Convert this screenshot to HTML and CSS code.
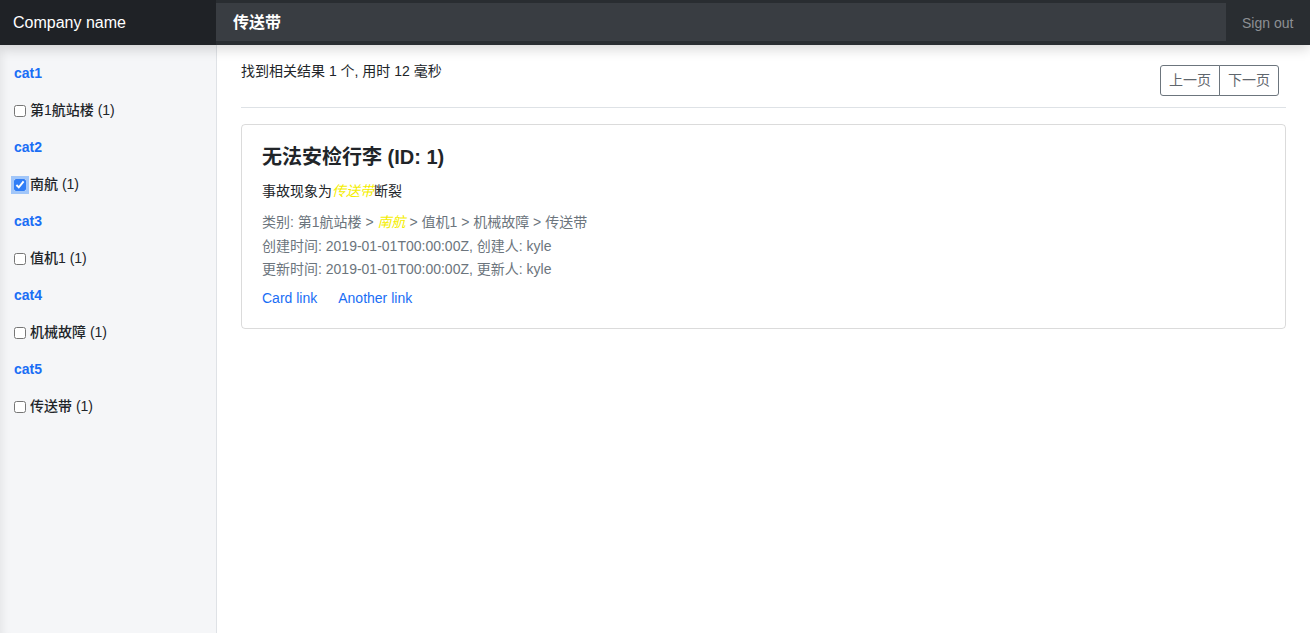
FILE: index.html
```html
<!DOCTYPE html>
<html lang="zh">
<head>
<meta charset="utf-8">
<title>Dashboard</title>
<link rel="stylesheet" href="styles.css">
</head>
<body>
<header class="navbar">
  <a class="brand" href="#">Company name</a>
  <div class="search"><span class="search-text">传送带</span></div>
  <a class="signout" href="#">Sign out</a>
</header>
<div class="layout">
  <nav class="sidebar">
    <div class="cat">cat1</div>
    <label class="item"><input type="checkbox"> 第1航站楼 (1)</label>
    <div class="cat">cat2</div>
    <label class="item"><input type="checkbox" class="focused" checked> 南航 (1)</label>
    <div class="cat">cat3</div>
    <label class="item"><input type="checkbox"> 值机1 (1)</label>
    <div class="cat">cat4</div>
    <label class="item"><input type="checkbox"> 机械故障 (1)</label>
    <div class="cat">cat5</div>
    <label class="item"><input type="checkbox"> 传送带 (1)</label>
  </nav>
  <main class="main">
    <div class="head">
      <div class="result">找到相关结果 1 个, 用时 12 毫秒</div>
      <div class="btn-group">
        <button class="btn">上一页</button><button class="btn">下一页</button>
      </div>
    </div>
    <div class="card">
      <h5 class="card-title">无法安检行李 (ID: 1)</h5>
      <p class="card-text">事故现象为<em class="hl">传送带</em>断裂</p>
      <div class="meta">
        <div>类别: 第1航站楼 &gt; <em class="hl">南航</em> &gt; 值机1 &gt; 机械故障 &gt; 传送带</div>
        <div>创建时间: 2019-01-01T00:00:00Z, 创建人: kyle</div>
        <div>更新时间: 2019-01-01T00:00:00Z, 更新人: kyle</div>
      </div>
      <div class="links">
        <a href="#" class="card-link">Card link</a>
        <a href="#" class="card-link">Another link</a>
      </div>
    </div>
  </main>
</div>
</body>
</html>
```

FILE: styles.css
```css
* { box-sizing: border-box; }
html, body { height: 100%; }
body {
  margin: 0;
  font-family: "Liberation Sans", "Noto Sans CJK SC", sans-serif;
  font-size: 14px;
  line-height: 21px;
  color: #212529;
  background: #fff;
  display: flex;
  flex-direction: column;
  overflow: hidden;
}
a { text-decoration: none; }

.navbar {
  display: flex;
  align-items: stretch;
  height: 45px;
  background: #292d31;
  box-shadow: 0 4px 12px rgba(0,0,0,.16);
  position: relative;
  z-index: 2;
  flex: none;
}
.brand {
  width: 216px;
  flex: none;
  background: #1f2226;
  color: #fff;
  font-size: 16px;
  font-weight: 500;
  display: flex;
  align-items: center;
  padding-left: 13px;
  padding-bottom: 1px;
}
.search {
  flex: 1;
  margin: 3px 0 4px;
  background: #393d42;
  display: flex;
  align-items: center;
  padding-left: 17px;
}
.search-text {
  color: #fff;
  font-size: 16px;
  font-weight: 600;
}
.signout {
  flex: none;
  width: 84px;
  color: #8d9094;
  font-size: 14px;
  display: flex;
  align-items: center;
  padding-left: 16px;
  padding-top: 1px;
}

.layout {
  flex: 1;
  display: flex;
  min-height: 0;
}
.sidebar {
  width: 217px;
  flex: none;
  background: #f5f6f8;
  border-right: 1px solid #dfe2e6;
  box-shadow: inset 10px 0 10px -8px rgba(0,0,0,.08);
  padding: 10px 0 0 14px;
  display: flex;
  flex-direction: column;
}
.cat {
  height: 37px;
  display: flex;
  align-items: center;
  color: #1a6ef5;
  font-weight: 700;
}
.item {
  height: 37px;
  display: flex;
  align-items: center;
  gap: 4px;
  font-weight: 500;
  color: #212529;
}
.item input {
  margin: 0;
  width: 12px;
  height: 12px;
  accent-color: #2f7df6;
}
.item input.focused {
  outline: 3px solid rgba(60,140,250,.45);
  outline-offset: 0;
  border-radius: 3px;
}

.main {
  flex: 1;
  padding: 16px 24px 0 24px;
}
.head {
  display: flex;
  justify-content: space-between;
  align-items: flex-start;
  padding-bottom: 11px;
  border-bottom: 1px solid #dee2e6;
  margin-bottom: 16px;
}
.btn-group {
  display: flex;
  margin-top: 4px;
  margin-right: 7px;
}
.btn {
  font-family: inherit;
  font-size: 14px;
  line-height: 21px;
  padding: 4px 8px;
  background: #fff;
  color: #5f666d;
  border: 1px solid #6c757d;
  margin: 0;
  cursor: pointer;
}
.btn:first-child { border-radius: 3px 0 0 3px; }
.btn:last-child { border-radius: 0 3px 3px 0; margin-left: -1px; }

.card {
  border: 1px solid rgba(0,0,0,.14);
  border-radius: 4px;
  padding: 20px 20px 19px;
}
.card-title {
  margin: 0 0 12px;
  font-size: 20px;
  line-height: 24px;
  font-weight: 600;
}
.card-text { margin: 0 0 9px; }
.hl { color: #f4ee00; }
.meta {
  color: #6c757d;
  line-height: 23.5px;
}
.links {
  margin-top: 6px;
  display: flex;
  gap: 21px;
}
.card-link { color: #1a6ef5; }
```
